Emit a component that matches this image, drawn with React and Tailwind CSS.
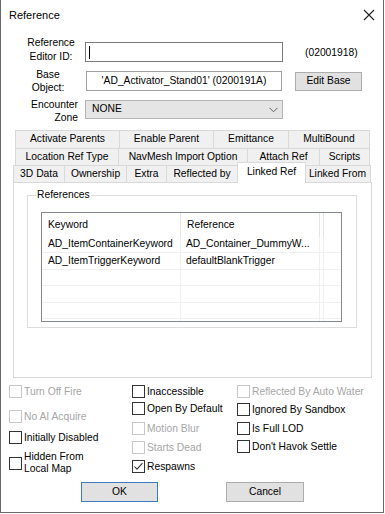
import React from "react";

function Check({ label, disabled, checked, lines, mt = "" }) {
  return (
    <div className={`flex items-center ${lines ? "h-[24px]" : "h-[13px]"} ${mt}`}>
      <div
        className={`w-[13px] h-[13px] shrink-0 border bg-white flex items-center justify-center ${
          disabled ? "border-[#c8c8c8]" : "border-[#333333]"
        }`}
      >
        {checked && (
          <svg width="11" height="11" viewBox="0 0 11 11">
            <polyline points="1.5,5.5 4,8.2 9.5,2.2" fill="none" stroke="#333" strokeWidth="1.1" />
          </svg>
        )}
      </div>
      <div
        className={`ml-[2px] whitespace-nowrap leading-[12px] ${disabled ? "text-[#a6a6a6]" : "text-black"}`}
      >
        {lines ? (
          <>
            {lines[0]}
            <br />
            {lines[1]}
          </>
        ) : (
          label
        )}
      </div>
    </div>
  );
}

function Tab({ w, children, first }) {
  return (
    <div
      className={`${w} h-full shrink-0 flex items-center justify-center bg-[#f0f0f0] border-t border-r border-[#d9d9d9] ${
        first ? "border-l" : ""
      } whitespace-nowrap`}
    >
      {children}
    </div>
  );
}

function Row({ a, b, last }) {
  return (
    <div className={`flex ${last ? "h-[2px]" : "h-[16.5px] border-b border-[#f0f0f0]"}`}>
      <div className="w-[139px] shrink-0 border-r border-[#f0f0f0] pl-[6px] flex items-center whitespace-nowrap">
        {a}
      </div>
      <div className="w-[139px] shrink-0 border-r border-[#f0f0f0] pl-[5px] flex items-center whitespace-nowrap">
        {b}
      </div>
      <div className="w-[4px] shrink-0 border-r border-[#f0f0f0]" />
      <div className="flex-1" />
    </div>
  );
}

export default function App() {
  return (
    <div className="w-[385px] h-[514px] bg-white overflow-hidden font-['Liberation_Sans',Arial,sans-serif] text-[10.3px] text-black leading-none">
      <div className="w-[384px] h-[513px] border-l border-r border-b border-[#6a6a6a] flex flex-col">
        {/* title bar */}
        <div className="h-[29px] flex items-center justify-between pl-[8px] pr-[8px] shrink-0">
          <span className="text-[11px] mt-[2px]">Reference</span>
          <svg width="12" height="12" viewBox="0 0 12 12">
            <path d="M1 1 L11 11 M11 1 L1 11" stroke="#222" strokeWidth="1.1" fill="none" />
          </svg>
        </div>

        {/* row 1 */}
        <div className="flex items-start h-[28px] mt-[7px] shrink-0">
          <div className="ml-[19px] w-[62px] text-center leading-[14px]">
            Reference
            <br />
            Editor ID:
          </div>
          <div className="ml-[3px] mt-[6px] w-[198px] h-[20px] border border-[#7a7a7a] bg-white flex items-start">
            <div className="ml-[3px] mt-[3px] w-[1px] h-[13px] bg-black" />
          </div>
          <div className="ml-[22px] mt-[10px] leading-[14px]">(02001918)</div>
        </div>

        {/* row 2 */}
        <div className="flex items-start h-[30px] shrink-0">
          <div className="ml-[19px] mt-[4px] w-[56px] text-center leading-[13px]">
            Base
            <br />
            Object:
          </div>
          <div className="ml-[10px] mt-[7px] w-[196px] h-[20px] border border-[#a0a0a0] bg-white flex items-center justify-center whitespace-nowrap">
            'AD_Activator_Stand01' (0200191A)
          </div>
          <div className="ml-[13px] mt-[8px] w-[67px] h-[19px] border border-[#adadad] bg-[#e1e1e1] flex items-center justify-center">
            Edit Base
          </div>
        </div>

        {/* row 3 */}
        <div className="flex items-start h-[26px] shrink-0">
          <div className="ml-[19px] mt-[4px] w-[58px] text-right leading-[13px]">
            Encounter
            <br />
            Zone
          </div>
          <div className="ml-[7px] mt-[6px] w-[198px] h-[19px] border border-[#b4b4b4] bg-[#e5e5e5] flex items-center justify-between pl-[6px] pr-[4px]">
            <span>NONE</span>
            <svg width="9" height="6" viewBox="0 0 9 6">
              <polyline points="0.5,0.8 4.5,4.8 8.5,0.8" fill="none" stroke="#606060" strokeWidth="1" />
            </svg>
          </div>
        </div>

        {/* tabs */}
        <div className="mt-[10px] ml-[12px] w-[359px] flex flex-col shrink-0">
          <div className="flex h-[18px] ml-[2px]">
            <Tab w="w-[105px]" first>Activate Parents</Tab>
            <Tab w="w-[94px]">Enable Parent</Tab>
            <Tab w="w-[75px]">Emittance</Tab>
            <Tab w="w-[81px]">MultiBound</Tab>
          </div>
          <div className="flex h-[17px] ml-[2px]">
            <Tab w="w-[104px]" first>Location Ref Type</Tab>
            <Tab w="w-[129px]">NavMesh Import Option</Tab>
            <Tab w="w-[72px]">Attach Ref</Tab>
            <Tab w="w-[50px]">Scripts</Tab>
          </div>
          <div className="flex h-[17px] items-end">
            <Tab w="w-[52px]" first>3D Data</Tab>
            <Tab w="w-[62px]">Ownership</Tab>
            <Tab w="w-[40px]">Extra</Tab>
            <Tab w="w-[71px]">Reflected by</Tab>
            <div className="relative z-10 w-[69px] -ml-[1px] -mr-[1px] h-[21px] -mb-[1px] shrink-0 bg-white border-t border-l border-r border-[#d9d9d9] flex items-start justify-center pt-[4px] whitespace-nowrap">
              Linked Ref
            </div>
            <Tab w="w-[66px]">Linked From</Tab>
          </div>

          {/* page */}
          <div className="w-[359px] h-[196px] border border-[#d9d9d9] bg-white">
            <fieldset className="ml-[13px] mt-[6px] w-[330px] h-[139px] border border-[#dcdcdc] px-[13px]">
              <legend className="ml-[-5px] px-[1px] leading-[12px]">References</legend>
              <div className="mt-[11px] w-[301px] h-[110px] border border-[#828790] bg-white flex flex-col">
                <div className="flex h-[24px]">
                  <div className="w-[139px] shrink-0 border-r border-[#e5e5e5] pl-[6px] flex items-center">
                    Keyword
                  </div>
                  <div className="w-[139px] shrink-0 border-r border-[#e5e5e5] pl-[6px] flex items-center">
                    Reference
                  </div>
                  <div className="w-[4px] shrink-0 border-r border-[#e5e5e5]" />
                  <div className="flex-1" />
                </div>
                <Row a="AD_ItemContainerKeyword" b="AD_Container_DummyW..." />
                <Row a="AD_ItemTriggerKeyword" b="defaultBlankTrigger" />
                <Row a="" b="" />
                <Row a="" b="" />
                <Row a="" b="" />
                <Row a="" b="" last />
              </div>
            </fieldset>
          </div>
        </div>

        {/* checkboxes */}
        <div className="flex ml-[8px] mt-[7px] h-[91px] shrink-0">
          <div className="w-[123px] flex flex-col">
            <Check label="Turn Off Fire" disabled />
            <Check label="No AI Acquire" disabled mt="mt-[12px]" />
            <Check label="Initially Disabled" mt="mt-[8px]" />
            <Check lines={["Hidden From", "Local Map"]} mt="mt-[7px]" />
          </div>
          <div className="w-[105px] flex flex-col">
            <Check label="Inaccessible" />
            <Check label="Open By Default" mt="mt-[4px]" />
            <Check label="Motion Blur" disabled mt="mt-[7px]" />
            <Check label="Starts Dead" disabled mt="mt-[6px]" />
            <Check label="Respawns" checked mt="mt-[6px]" />
          </div>
          <div className="flex flex-col">
            <Check label="Reflected By Auto Water" disabled />
            <Check label="Ignored By Sandbox" mt="mt-[5px]" />
            <Check label="Is Full LOD" mt="mt-[6px]" />
            <Check label="Don't Havok Settle" mt="mt-[5px]" />
          </div>
        </div>

        {/* buttons */}
        <div className="flex mt-[6px] ml-[80px] shrink-0">
          <div className="w-[77px] h-[20px] border border-[#3d7bbf] bg-[#e1e1e1] flex items-center justify-center">
            OK
          </div>
          <div className="ml-[68px] w-[78px] h-[20px] border border-[#adadad] bg-[#e1e1e1] flex items-center justify-center">
            Cancel
          </div>
        </div>
      </div>
    </div>
  );
}
